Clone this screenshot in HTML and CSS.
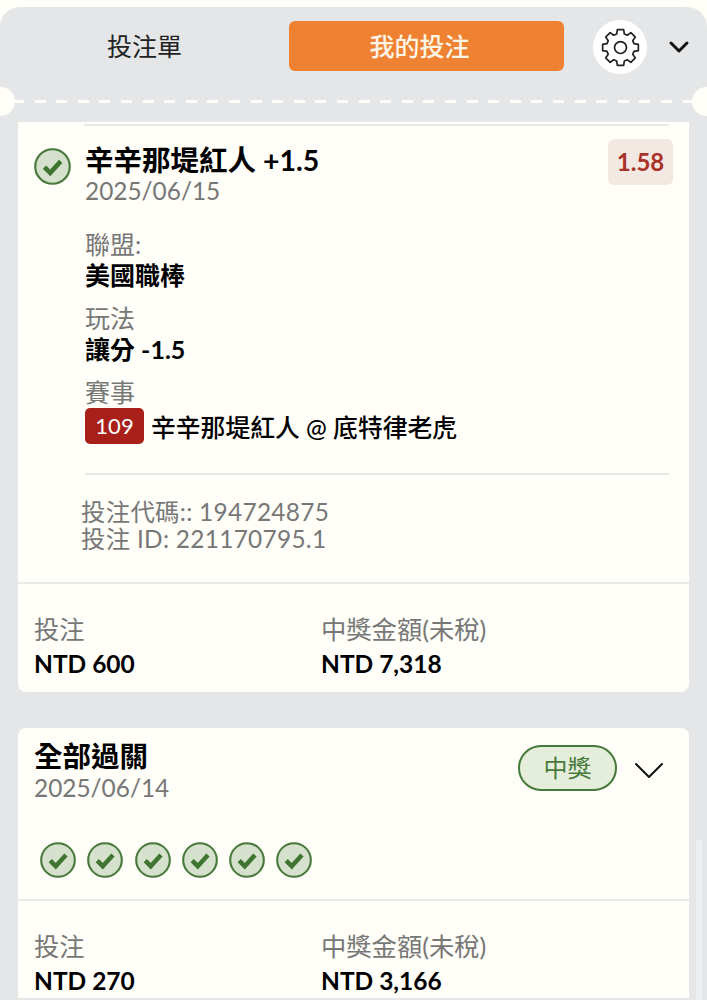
FILE: index.html
```html
<!DOCTYPE html>
<html lang="zh-Hant">
<head>
    <meta charset="UTF-8">
    <meta name="viewport" content="width=device-width, initial-scale=1.0">
    <title>我的投注</title>
    <link rel="stylesheet" href="styles.css">
</head>
<body>
    <div class="panel">
        <header class="top">
            <div class="tabs">
                <div class="tab">投注單</div>
                <div class="tab active">我的投注</div>
                <button class="gear" aria-label="設定">
                    <svg width="41" height="41" viewBox="0 0 24 24" fill="none" stroke="#222" stroke-width="1" stroke-linejoin="round">
                        <path d="M9.74 4.12L10.16 1.56H13.84L14.26 4.12L15.98 4.83L18.08 3.32L20.68 5.92L19.17 8.02L19.88 9.74L22.44 10.16V13.84L19.88 14.26L19.17 15.98L20.68 18.08L18.08 20.68L15.98 19.17L14.26 19.88L13.84 22.44H10.16L9.74 19.88L8.02 19.17L5.92 20.68L3.32 18.08L4.83 15.98L4.12 14.26L1.56 13.84V10.16L4.12 9.74L4.83 8.02L3.32 5.92L5.92 3.32L8.02 4.83Z"/>
                        <circle cx="12" cy="12" r="3.5"/>
                    </svg>
                </button>
                <svg class="collapse" width="22" height="14" viewBox="0 0 22 14" fill="none" stroke="#111" stroke-width="3" stroke-linecap="round" stroke-linejoin="round">
                    <path d="M3 3l8 8 8-8"/>
                </svg>
            </div>
            <div class="tear">
                <span class="notch left"></span>
                <span class="notch right"></span>
            </div>
        </header>

        <div class="list">
            <section class="card first">
                <div class="leg">
                    <div class="leg-top"></div>
                    <div class="leg-head">
                        <svg class="check big" viewBox="0 0 24 24"><use href="#tick"/></svg>
                        <div class="leg-title">
                            <h3>辛辛那堤紅人 +1.5</h3>
                            <div class="date">2025/06/15</div>
                        </div>
                        <div class="odds">1.58</div>
                    </div>
                    <div class="details">
                        <div class="label">聯盟:</div>
                        <div class="value">美國職棒</div>
                        <div class="label">玩法</div>
                        <div class="value">讓分 -1.5</div>
                        <div class="label">賽事</div>
                        <div class="value match"><span class="num">109</span><span class="teams">辛辛那堤紅人 @ 底特律老虎</span></div>
                    </div>
                    <div class="codes">
                        <div>投注代碼:: 194724875</div>
                        <div>投注 ID: 221170795.1</div>
                    </div>
                </div>
                <div class="totals">
                    <div class="total">
                        <div class="label">投注</div>
                        <div class="value">NTD 600</div>
                    </div>
                    <div class="total">
                        <div class="label">中獎金額(未稅)</div>
                        <div class="value">NTD 7,318</div>
                    </div>
                </div>
            </section>

            <section class="card second">
                <div class="parlay-head">
                    <div class="parlay-title">
                        <h3>全部過關</h3>
                        <div class="date">2025/06/14</div>
                    </div>
                    <div class="won">中獎</div>
                    <svg class="expand" width="30" height="18" viewBox="0 0 30 18" fill="none" stroke="#111" stroke-width="2" stroke-linecap="round" stroke-linejoin="round">
                        <path d="M2 3l13 13L28 3"/>
                    </svg>
                </div>
                <div class="ticks">
                    <svg class="check" viewBox="0 0 24 24"><use href="#tick"/></svg>
                    <svg class="check" viewBox="0 0 24 24"><use href="#tick"/></svg>
                    <svg class="check" viewBox="0 0 24 24"><use href="#tick"/></svg>
                    <svg class="check" viewBox="0 0 24 24"><use href="#tick"/></svg>
                    <svg class="check" viewBox="0 0 24 24"><use href="#tick"/></svg>
                    <svg class="check" viewBox="0 0 24 24"><use href="#tick"/></svg>
                </div>
                <div class="totals">
                    <div class="total">
                        <div class="label">投注</div>
                        <div class="value">NTD 270</div>
                    </div>
                    <div class="total">
                        <div class="label">中獎金額(未稅)</div>
                        <div class="value">NTD 3,166</div>
                    </div>
                </div>
            </section>
        </div>
        <div class="scrollbar"></div>
    </div>

    <svg class="defs" width="0" height="0">
        <symbol id="tick" viewBox="0 0 24 24">
            <circle cx="12" cy="12" r="11.2" fill="#d5e0cd" stroke="#47793a" stroke-width="1.4"/>
            <path d="M6.8 12.4l3.7 3.7 6.8-7.4" fill="none" stroke="#3f7431" stroke-width="3"/>
        </symbol>
    </svg>
</body>
</html>
```

FILE: styles.css
```css
* {
    box-sizing: border-box;
}

html, body {
    height: 1000px;
    overflow: hidden;
}

body {
    margin: 0;
    background-color: #fffef8;
    font-family: "Lato", "Noto Sans CJK TC", sans-serif;
    color: #000;
}

.panel {
    position: relative;
    height: 993px;
    margin-top: 7px;
    background-color: #e4e6e8;
    border-radius: 20px 20px 0 0;
    overflow: hidden;
}

.tabs {
    display: flex;
    align-items: center;
    height: 80px;
    padding: 0 16px 0 18px;
}

.tab {
    width: 253px;
    height: 50px;
    margin-top: -2px;
    margin-right: 18px;
    line-height: 50px;
    text-align: center;
    font-size: 25px;
    color: #222;
}

.tab.active {
    width: 275px;
    margin-right: 29px;
    padding-right: 14px;
    background-color: #ef8232;
    border-radius: 6px;
    color: #fff6e8;
    font-weight: 500;
}

.gear {
    display: flex;
    align-items: center;
    justify-content: center;
    width: 54px;
    height: 54px;
    margin-right: 21px;
    padding: 0;
    border: none;
    border-radius: 50%;
    background-color: #fff;
}

.collapse {
    flex: none;
}

.tear {
    position: relative;
    height: 35px;
}

.tear::before {
    content: "";
    position: absolute;
    left: 0;
    right: 0;
    top: 13px;
    height: 3px;
    background: repeating-linear-gradient(90deg, #fffef8 0 11px, transparent 11px 21.6px) 13px 0;
}

.notch {
    position: absolute;
    top: 0;
    width: 29px;
    height: 29px;
    border-radius: 50%;
    background-color: #fffef8;
}

.notch.left {
    left: -14px;
}

.notch.right {
    right: -14px;
}

.list {
    padding: 0 18px;
}

.card {
    background-color: #fffef8;
}

.first {
    height: 570px;
    border-radius: 0 0 8px 8px;
}

.second {
    margin-top: 36px;
    border-radius: 8px 8px 0 0;
}

.leg {
    height: 462px;
    padding: 2px 20px 0 16px;
    border-bottom: 2px solid #eaeae6;
}

.leg-top {
    height: 2px;
    margin: 0 0 0 50px;
    background-color: #e8e8e4;
}

.leg-head {
    display: flex;
    margin-top: 13px;
}

.check {
    display: block;
    flex: none;
    width: 36px;
    height: 36px;
}

.check.big {
    width: 37px;
    height: 37px;
    margin-top: 9px;
    margin-right: 14px;
}

.leg-title {
    flex: 1;
}

h3 {
    margin: 0;
    padding-top: 4px;
    font-size: 28.5px;
    line-height: 35px;
    font-weight: 700;
}

.date {
    font-size: 24.4px;
    line-height: 26px;
    color: #777;
}

.odds {
    width: 65px;
    height: 46px;
    margin-right: -4px;
    line-height: 46px;
    text-align: center;
    font-size: 24px;
    font-weight: 700;
    color: #a83228;
    background-color: #f4e8e2;
    border-radius: 6px;
}

.details {
    margin: 25px 0 0 51px;
}

.label {
    font-size: 25px;
    line-height: 30px;
    color: #777;
}

.value {
    font-size: 25px;
    line-height: 32px;
    font-weight: 700;
    margin-bottom: 12px;
}

.match {
    display: flex;
    align-items: center;
    margin-top: 1px;
    margin-bottom: 0;
    padding-bottom: 29px;
    border-bottom: 2px solid #e8e8e4;
    font-size: 24.8px;
    font-weight: 500;
}

.teams {
    padding-top: 3px;
}

.num {
    width: 59px;
    height: 36px;
    margin-right: 7px;
    line-height: 36px;
    text-align: center;
    background-color: #a9201a;
    border-radius: 5px;
    color: #fff;
    font-size: 22px;
    font-weight: 400;
}

.codes {
    margin: 23px 0 0 47px;
    font-size: 24.4px;
    letter-spacing: 0.3px;
    line-height: 27px;
    color: #777;
}

.totals {
    display: flex;
    padding: 28px 16px 0;
}

.total {
    width: 287px;
}

.total .label {
    font-size: 25.3px;
    line-height: 34px;
}

.total .value {
    margin: 0;
    font-size: 24.5px;
    line-height: 35px;
}

.parlay-head {
    display: flex;
    align-items: flex-start;
    padding: 9px 25px 0 16px;
}

.parlay-title {
    flex: 1;
}

.parlay-title h3 {
    padding-top: 1px;
    line-height: 37px;
}

.won {
    width: 99px;
    height: 46px;
    margin-top: 8px;
    margin-right: 17px;
    line-height: 42px;
    text-align: center;
    font-size: 24px;
    color: #47793a;
    background-color: #e4eedb;
    border: 2px solid #47793a;
    border-radius: 23px;
}

.expand {
    margin-top: 24px;
}

.ticks {
    display: flex;
    gap: 11.3px;
    height: 100px;
    padding: 41px 0 0 22px;
    border-bottom: 2px solid #eaeae6;
}

.scrollbar {
    position: absolute;
    right: 5px;
    top: 833px;
    bottom: 0;
    width: 6px;
    background-color: #eceef0;
}

.defs {
    position: absolute;
}
```
